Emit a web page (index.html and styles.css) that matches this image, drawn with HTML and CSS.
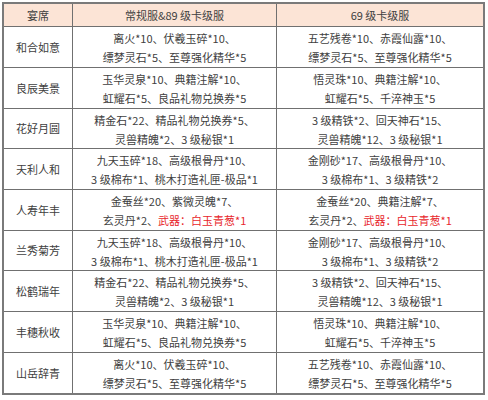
FILE: index.html
```html
<!DOCTYPE html>
<html lang="zh-CN">
<head>
<meta charset="utf-8">
<title>宴席奖励</title>
<link rel="stylesheet" href="styles.css">
</head>
<body>
<div class="table">
  <div class="cell head"><p>宴席</p></div>
  <div class="cell head"><p>常规服&amp;89 级卡级服</p></div>
  <div class="cell head"><p>69 级卡级服</p></div>

  <div class="cell name"><p>和合如意</p></div>
  <div class="cell"><p>离火*10、伏羲玉碎*10、<br>缥梦灵石*5、至尊强化精华*5</p></div>
  <div class="cell"><p>五艺残卷*10、赤霞仙露*10、<br>缥梦灵石*5、至尊强化精华*5</p></div>

  <div class="cell name"><p>良辰美景</p></div>
  <div class="cell"><p>玉华灵泉*10、典籍注解*10、<br>虹耀石*5、良品礼物兑换券*5</p></div>
  <div class="cell"><p>悟灵珠*10、典籍注解*10、<br>虹耀石*5、千淬神玉*5</p></div>

  <div class="cell name"><p>花好月圆</p></div>
  <div class="cell"><p>精金石*22、精品礼物兑换券*5、<br>灵兽精魄*2、3 级秘银*1</p></div>
  <div class="cell"><p>3 级精铁*2、回天神石*15、<br>灵兽精魄*12、3 级秘银*1</p></div>

  <div class="cell name"><p>天利人和</p></div>
  <div class="cell"><p>九天玉碎*18、高级根骨丹*10、<br>3 级棉布*1、桃木打造礼匣-极品*1</p></div>
  <div class="cell"><p>金刚砂*17、高级根骨丹*10、<br>3 级棉布*1、3 级精铁*2</p></div>

  <div class="cell name"><p>人寿年丰</p></div>
  <div class="cell"><p>金蚕丝*20、紫微灵魄*7、<br>玄灵丹*2、<span class="red">武器：白玉青葱*1</span></p></div>
  <div class="cell"><p>金蚕丝*20、典籍注解*7、<br>玄灵丹*2、<span class="red">武器：白玉青葱*1</span></p></div>

  <div class="cell name"><p>兰秀菊芳</p></div>
  <div class="cell"><p>九天玉碎*18、高级根骨丹*10、<br>3 级棉布*1、桃木打造礼匣-极品*1</p></div>
  <div class="cell"><p>金刚砂*17、高级根骨丹*10、<br>3 级棉布*1、3 级精铁*2</p></div>

  <div class="cell name"><p>松鹤瑞年</p></div>
  <div class="cell"><p>精金石*22、精品礼物兑换券*5、<br>灵兽精魄*2、3 级秘银*1</p></div>
  <div class="cell"><p>3 级精铁*2、回天神石*15、<br>灵兽精魄*12、3 级秘银*1</p></div>

  <div class="cell name"><p>丰穗秋收</p></div>
  <div class="cell"><p>玉华灵泉*10、典籍注解*10、<br>虹耀石*5、良品礼物兑换券*5</p></div>
  <div class="cell"><p>悟灵珠*10、典籍注解*10、<br>虹耀石*5、千淬神玉*5</p></div>

  <div class="cell name"><p>山岳辞青</p></div>
  <div class="cell"><p>离火*10、伏羲玉碎*10、<br>缥梦灵石*5、至尊强化精华*5</p></div>
  <div class="cell"><p>五艺残卷*10、赤霞仙露*10、<br>缥梦灵石*5、至尊强化精华*5</p></div>
</div>
</body>
</html>
```

FILE: styles.css
```css
html, body {
  margin: 0;
  padding: 0;
  background: #ffffff;
}

body {
  padding: 2px 0 0 2px;
  font-family: "Noto Sans CJK SC", "Noto Sans", sans-serif;
  font-size: 11px;
  color: #404040;
}

.table {
  width: 483px;
  box-sizing: border-box;
  display: grid;
  grid-template-columns: 68px 203px 206px;
  grid-template-rows: 22px 40px 40px 39px 40px 40px 39px 40px 40px 40px;
  gap: 1px;
  background: #707070;
  border: 2px solid #7a7a7a;
}

.cell {
  background: #ffffff;
  display: flex;
  align-items: center;
  justify-content: center;
  padding-top: 2px;
}

.cell p {
  margin: 0;
  text-align: center;
  line-height: 19px;
  white-space: nowrap;
}

.head {
  background: #fce4d6;
  padding-top: 0;
}

.name {
  padding-top: 0;
}

.red {
  color: #e8262b;
}
```
